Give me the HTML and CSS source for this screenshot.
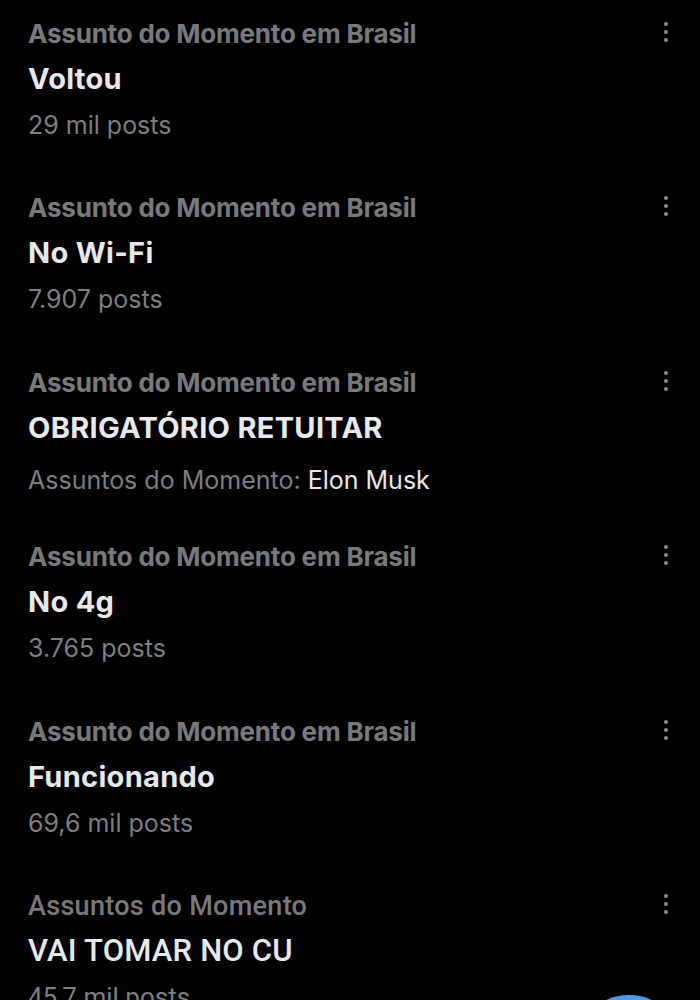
FILE: index.html
```html
<!DOCTYPE html>
<html lang="pt-BR">
<head>
    <meta charset="UTF-8">
    <meta name="viewport" content="width=device-width, initial-scale=1.0">
    <title>Assuntos do Momento</title>
    <link rel="stylesheet" href="styles.css">
</head>
<body>
    <div class="trends">
        <div class="trend">
            <div class="info">
                <div class="category">Assunto do Momento em Brasil</div>
                <div class="title">Voltou</div>
                <div class="count">29 mil posts</div>
            </div>
            <button class="more"><span></span><span></span><span></span></button>
        </div>
        <div class="trend">
            <div class="info">
                <div class="category">Assunto do Momento em Brasil</div>
                <div class="title">No Wi-Fi</div>
                <div class="count">7.907 posts</div>
            </div>
            <button class="more"><span></span><span></span><span></span></button>
        </div>
        <div class="trend">
            <div class="info">
                <div class="category">Assunto do Momento em Brasil</div>
                <div class="title">OBRIGATÓRIO RETUITAR</div>
                <div class="count related">Assuntos do Momento: <span class="topic">Elon Musk</span></div>
            </div>
            <button class="more"><span></span><span></span><span></span></button>
        </div>
        <div class="trend">
            <div class="info">
                <div class="category">Assunto do Momento em Brasil</div>
                <div class="title">No 4g</div>
                <div class="count">3.765 posts</div>
            </div>
            <button class="more"><span></span><span></span><span></span></button>
        </div>
        <div class="trend">
            <div class="info">
                <div class="category">Assunto do Momento em Brasil</div>
                <div class="title">Funcionando</div>
                <div class="count">69,6 mil posts</div>
            </div>
            <button class="more"><span></span><span></span><span></span></button>
        </div>
        <div class="trend alt">
            <div class="info">
                <div class="category">Assuntos do Momento</div>
                <div class="title">VAI TOMAR NO CU</div>
                <div class="count">45,7 mil posts</div>
            </div>
            <button class="more"><span></span><span></span><span></span></button>
        </div>
    </div>
    <div class="fab"></div>
</body>
</html>
```

FILE: styles.css
```css
* {
    margin: 0;
    padding: 0;
    box-sizing: border-box;
}

body {
    font-family: Inter, "Liberation Sans", sans-serif;
    background-color: #000;
    color: #e7e9ea;
    width: 700px;
    height: 1000px;
    overflow: hidden;
    position: relative;
}

.trends {
    display: flex;
    flex-direction: column;
    padding-top: 12px;
}

.trend {
    display: flex;
    justify-content: space-between;
    align-items: flex-start;
    height: 174.4px;
    padding-left: 28px;
    padding-right: 32px;
}

.category {
    font-size: 26px;
    font-weight: 700;
    color: #77797c;
    line-height: 44px;
    letter-spacing: -0.2px;
}

.title {
    font-size: 29px;
    font-weight: 700;
    color: #e7e9ea;
    line-height: 46px;
    letter-spacing: 0.3px;
}

.count {
    font-size: 25px;
    color: #7c7e81;
    line-height: 46px;
}

.related {
    margin-top: 6px;
}

.topic {
    color: #e7e9ea;
}

.more {
    background: none;
    border: none;
    display: flex;
    flex-direction: column;
    gap: 4px;
    padding-top: 10px;
}

.more span {
    width: 4px;
    height: 4px;
    border-radius: 50%;
    background-color: #8a8d90;
}

.alt .category,
.alt .title,
.alt .count {
    font-family: Roboto, sans-serif;
}

.alt .category {
    font-weight: 500;
    font-size: 27px;
    letter-spacing: 0.3px;
}

.alt .title {
    font-weight: 500;
    font-size: 31px;
    letter-spacing: 0.2px;
}

.alt .count {
    font-size: 26px;
}

.fab {
    position: absolute;
    left: 574px;
    top: 995px;
    width: 110px;
    height: 110px;
    border-radius: 50%;
    background-color: #4e9be4;
}
```
